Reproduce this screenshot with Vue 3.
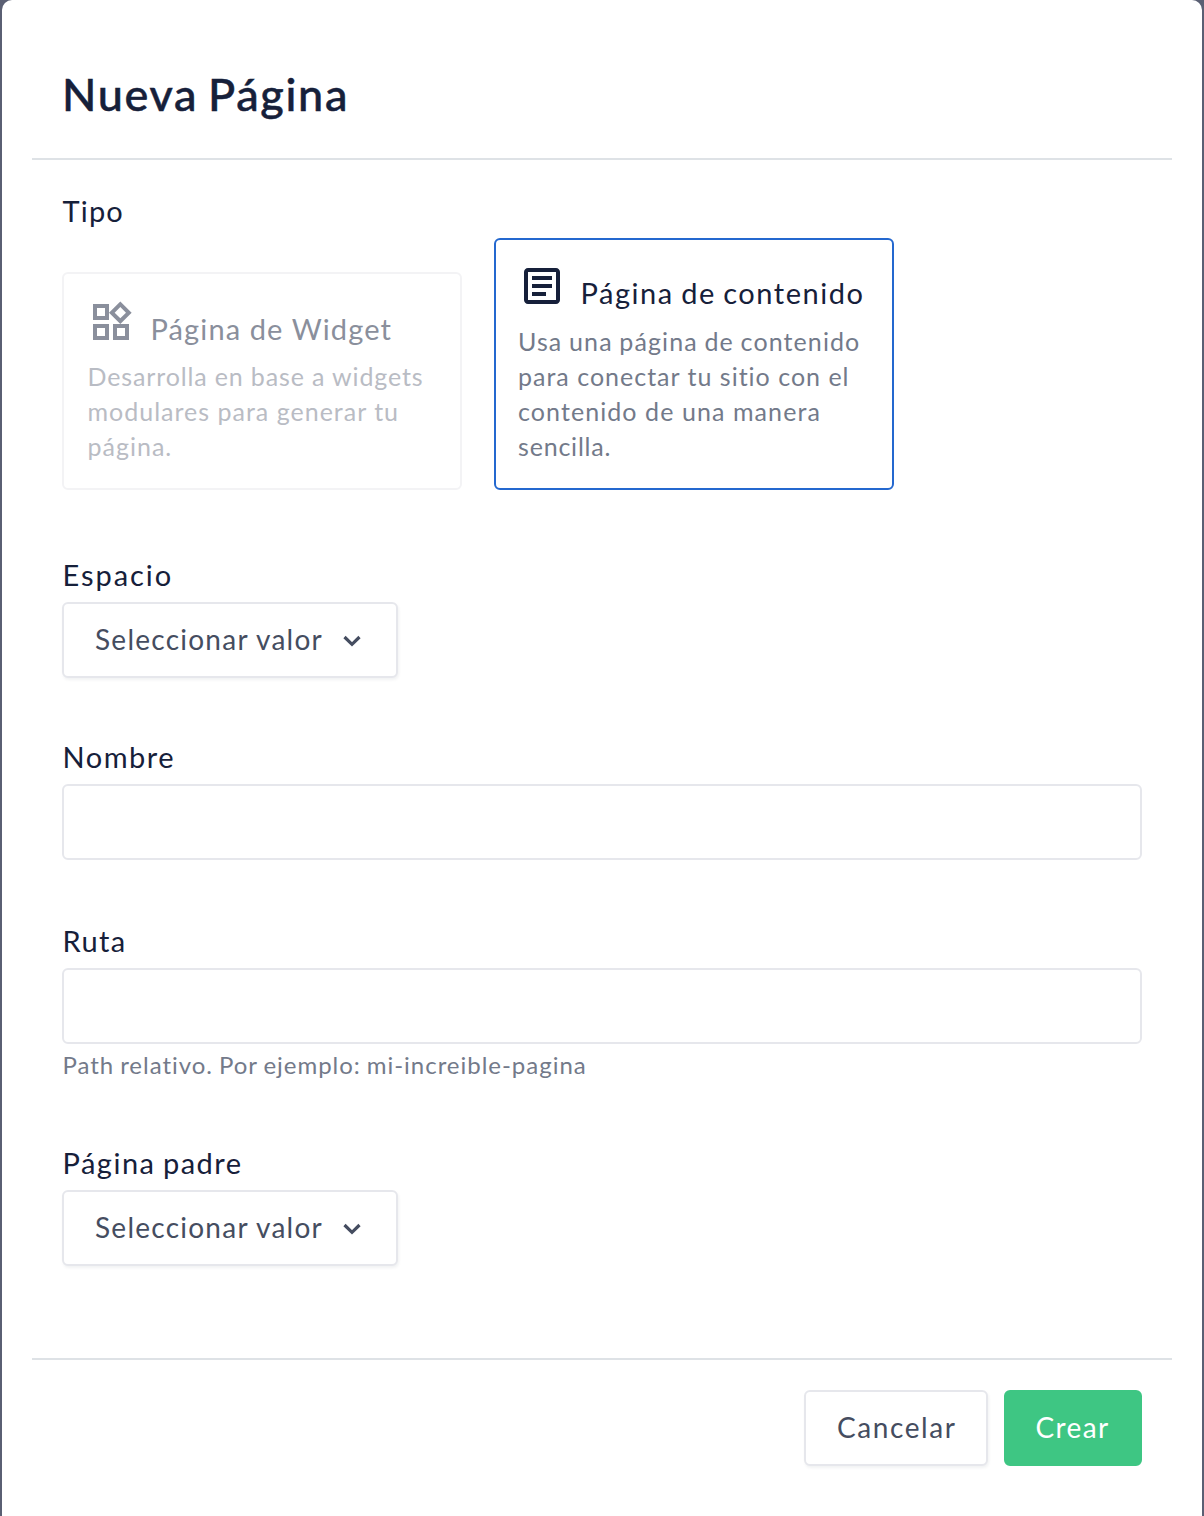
<script setup>
import { ref } from 'vue'

const name = ref('')
const route = ref('')
</script>

<template>
  <div class="backdrop">
    <div class="modal">
      <header class="modal-header">
        <h1><span class="t-title">Nueva Página</span></h1>
      </header>

      <main class="modal-body">
        <section class="field types">
          <label><span class="t-tipo">Tipo</span></label>
          <div class="cards">
            <div class="card disabled">
              <div class="card-head">
                <svg class="icon" viewBox="0 0 24 24" width="48" height="48">
                  <path d="M16.66 4.52l2.83 2.83-2.83 2.83-2.83-2.83 2.83-2.83M9 5v4H5V5h4m10 10v4h-4v-4h4M9 15v4H5v-4h4m7.66-13.31L11 7.34 16.66 13l5.66-5.66-5.66-5.65zM11 3H3v8h8V3zm10 10h-8v8h8v-8zm-10 0H3v8h8v-8z" />
                </svg>
                <span class="card-title t-widget">Página de Widget</span>
              </div>
              <p><span class="t-w1">Desarrolla en base a widgets</span><br /><span class="t-w2">modulares para generar tu</span><br /><span class="t-w3">página.</span></p>
            </div>
            <div class="card selected">
              <div class="card-head">
                <svg class="icon" viewBox="0 0 24 24" width="48" height="48">
                  <path d="M19 5v14H5V5h14m0-2H5c-1.100 0-2 .9-2 2v14c0 1.100.9 2 2 2h14c1.100 0 2-.9 2-2V5c0-1.100-.9-2-2-2zM14 17H7v-2h7v2zm3-4H7v-2h10v2zm0-4H7V7h10v2z" />
                </svg>
                <span class="card-title t-content">Página de contenido</span>
              </div>
              <p><span class="t-c1">Usa una página de contenido</span><br /><span class="t-c2">para conectar tu sitio con el</span><br /><span class="t-c3">contenido de una manera</span><br /><span class="t-c4">sencilla.</span></p>
            </div>
          </div>
        </section>

        <section class="field space">
          <label><span class="t-espacio">Espacio</span></label>
          <button class="select" type="button">
            <span class="t-select">Seleccionar valor</span>
            <svg class="chevron" viewBox="0 0 20 12" width="20" height="12"><path d="M2.500 2l7.500 7.300L17.500 2" /></svg>
          </button>
        </section>

        <section class="field name">
          <label for="name"><span class="t-nombre">Nombre</span></label>
          <input id="name" v-model="name" type="text" />
        </section>

        <section class="field route">
          <label for="route"><span class="t-ruta">Ruta</span></label>
          <input id="route" v-model="route" type="text" />
          <small><span class="t-help">Path relativo. Por ejemplo: mi-increible-pagina</span></small>
        </section>

        <section class="field parent">
          <label><span class="t-padre">Página padre</span></label>
          <button class="select" type="button">
            <span class="t-select">Seleccionar valor</span>
            <svg class="chevron" viewBox="0 0 20 12" width="20" height="12"><path d="M2.500 2l7.500 7.300L17.500 2" /></svg>
          </button>
        </section>
      </main>

      <footer class="modal-footer">
        <button class="cancel" type="button"><span class="t-cancel">Cancelar</span></button>
        <button class="create" type="button"><span class="t-create">Crear</span></button>
      </footer>
    </div>
  </div>
</template>

<style>
body {
  margin: 0;
  background: #5a5f73;
}
</style>

<style scoped>
* {
  box-sizing: border-box;
}
.backdrop {
  height: 1516px;
  padding: 0 2px;
  overflow: hidden;
  background: #5a5f73;
  font-family: Lato, "Open Sans", sans-serif;
  font-variant-ligatures: none;
  color: #16203a;
}
.modal {
  height: 1536px;
  padding: 0 30px;
  background: #fff;
  border-radius: 10px;
}
.modal-header {
  height: 160px;
  padding: 64px 30px 0;
  border-bottom: 2px solid #dee2e6;
}
h1 {
  margin: 0;
  font-size: 45px;
  line-height: 60px;
  font-weight: 500;
  white-space: nowrap;
  -webkit-text-stroke: 0.5px currentColor;
}
.modal-body {
  height: 1198px;
  padding: 31px 30px 0;
}
.field {
  display: flex;
  flex-direction: column;
  align-items: flex-start;
}
label {
  margin-bottom: 7px;
  padding-left: 0.5px;
  font-size: 29px;
  line-height: 40px;
  white-space: nowrap;
}
.cards {
  display: flex;
  align-items: flex-end;
  gap: 32px;
}
.card {
  width: 400px;
  border: 2px solid #e6e7ec;
  border-radius: 6px;
}
.card.disabled {
  height: 218px;
  padding: 24px 0 0 24px;
  border-color: #f3f3f5;
}
.card.selected {
  height: 252px;
  padding: 22px 0 0 22px;
  border-color: #2468cf;
}
.card-head {
  display: flex;
  height: 61.6px;
}
.card.disabled .card-head {
  height: 61px;
}
.icon {
  flex: none;
  fill: currentColor;
}
.disabled .icon {
  margin-left: -0.7px;
  margin-right: 0.7px;
}
.card-title {
  padding: 11px 0 0 14.5px;
  font-size: 29px;
  line-height: 40px;
  white-space: nowrap;
}
.disabled .card-head {
  color: #8a8f9c;
}
.card p {
  margin: 0;
  font-size: 25px;
  line-height: 35.2px;
  white-space: nowrap;
  color: #737a8a;
}
.card.disabled p {
  margin-left: -0.5px;
  color: #b9bcc4;
}
.space {
  margin-top: 65px;
}
.name {
  margin-top: 59px;
}
.route {
  margin-top: 61px;
}
.parent {
  margin-top: 60px;
}
input {
  width: 100%;
  height: 76px;
  padding: 0 30px;
  border: 2px solid #e6e7ec;
  border-radius: 6px;
  background: #fff;
  font: inherit;
  font-size: 28px;
  outline: none;
}
small {
  margin-top: 3px;
  padding-left: 0.5px;
  font-size: 24px;
  line-height: 36px;
  color: #737a8a;
  white-space: nowrap;
}
button {
  display: flex;
  align-items: center;
  height: 76px;
  margin: 0;
  border: 2px solid #e6e7ec;
  border-radius: 6px;
  background: #fff;
  box-shadow: 1px 2px 3px rgba(22, 32, 58, 0.06);
  color: #454d60;
  font-family: inherit;
  font-size: 28px;
  line-height: 40px;
  white-space: nowrap;
}
button span {
  margin-bottom: 2px;
}
.select {
  width: 336px;
  justify-content: space-between;
  padding: 0 34px 0 31px;
}
.chevron {
  flex: none;
  margin-top: 2px;
  fill: none;
  stroke: currentColor;
  stroke-width: 3.2;
}
.modal-footer {
  display: flex;
  justify-content: flex-end;
  gap: 16px;
  padding: 30px 30px 0;
  border-top: 2px solid #dee2e6;
}
.cancel {
  width: 184px;
  justify-content: center;
}
.create {
  width: 138px;
  justify-content: center;
  border-color: #3ec683;
  background: #3ec683;
  box-shadow: none;
  color: #fff;
}

/* tracking */
.t-title { letter-spacing: 1.65px; word-spacing: -3px; }
.t-tipo { letter-spacing: 1.2px; }
.t-widget { letter-spacing: 1.12px; }
.t-content { letter-spacing: 1.53px; word-spacing: -1.5px; }
.t-w1 { letter-spacing: 0.86px; }
.t-w2 { letter-spacing: 1px; }
.t-w3 { letter-spacing: 1px; }
.t-c1 { letter-spacing: 1.1px; word-spacing: -0.8px; }
.t-c2 { letter-spacing: 1px; }
.t-c3 { letter-spacing: 1.08px; }
.t-c4 { letter-spacing: 0.8px; }
.t-espacio { letter-spacing: 1.95px; }
.t-nombre { letter-spacing: 1.5px; }
.t-ruta { letter-spacing: 1.4px; }
.t-help { letter-spacing: 0.98px; word-spacing: -1.2px; }
.t-padre { letter-spacing: 1.5px; word-spacing: -1.5px; }
.t-select { letter-spacing: 1.25px; }
.t-cancel { letter-spacing: 1.55px; margin-right: -1.5px; }
.t-create { letter-spacing: 1.4px; margin-right: 0.8px; }
</style>
